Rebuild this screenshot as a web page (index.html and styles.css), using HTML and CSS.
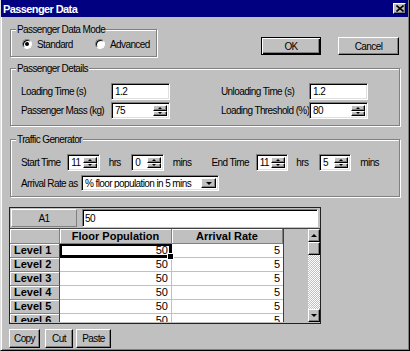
FILE: index.html
```html
<!DOCTYPE html>
<html lang="en">
<head>
  <meta charset="UTF-8">
  <meta name="viewport" content="width=device-width, initial-scale=1.0">
  <title>Passenger Data</title>
  <link rel="stylesheet" href="styles.css">
</head>
<body>
  <div class="window">
    <!-- Title bar -->
    <div class="titlebar">
      <span class="title">Passenger Data</span>
      <span class="close-btn">
        <svg width="8" height="7" viewBox="0 0 8 7"><path d="M0.5 0.5 L7.5 6.5 M7.5 0.5 L0.5 6.5" stroke="#000" stroke-width="1.6"/></svg>
      </span>
    </div>

    <div class="content">
      <div class="top-row">
        <div class="group mode-group">
          <span class="legend">Passenger Data Mode</span>
          <label class="radio radio-standard"><span class="radio-dot checked"></span>Standard</label>
          <label class="radio"><span class="radio-dot"></span>Advanced</label>
        </div>
        <div class="dialog-buttons">
          <button class="btn btn-default ok-btn">OK</button>
          <button class="btn cancel-btn">Cancel</button>
        </div>
      </div>

      <!-- Passenger details -->
      <div class="group details-group">
        <span class="legend">Passenger Details</span>
        <div class="details-grid">
          <span class="label">Loading Time (s)</span>
          <div class="field"><span class="field-text">1.2</span></div>
          <span></span>
          <span class="label">Unloading Time (s)</span>
          <div class="field"><span class="field-text">1.2</span></div>

          <span class="label">Passenger Mass (kg)</span>
          <div class="field"><span class="field-text">75</span><span class="spinner"><span class="spin-up"></span><span class="spin-down"></span></span></div>
          <span></span>
          <span class="label">Loading Threshold (%)</span>
          <div class="field"><span class="field-text">80</span><span class="spinner"><span class="spin-up"></span><span class="spin-down"></span></span></div>
        </div>
      </div>

      <!-- Traffic generator -->
      <div class="group traffic-group">
        <span class="legend">Traffic Generator</span>
        <div class="traffic-row">
          <span class="label start-label">Start Time</span>
          <div class="field time-field"><span class="field-text">11</span><span class="spinner"><span class="spin-up"></span><span class="spin-down"></span></span></div>
          <span class="label unit hrs">hrs</span>
          <div class="field time-field"><span class="field-text">0</span><span class="spinner"><span class="spin-up"></span><span class="spin-down"></span></span></div>
          <span class="label unit mins">mins</span>
          <span class="label end-label">End Time</span>
          <div class="field time-field"><span class="field-text">11</span><span class="spinner"><span class="spin-up"></span><span class="spin-down"></span></span></div>
          <span class="label unit hrs hrs-end">hrs</span>
          <div class="field time-field"><span class="field-text">5</span><span class="spinner"><span class="spin-up"></span><span class="spin-down"></span></span></div>
          <span class="label unit mins">mins</span>
        </div>
        <div class="traffic-row rate-row">
          <span class="label rate-label">Arrival Rate as</span>
          <div class="field select-field"><span class="field-text">% floor population in 5 mins</span><span class="drop-btn"></span></div>
        </div>
      </div>

      <!-- Spreadsheet -->
      <div class="sheet">
        <div class="formula-bar">
          <div class="cell-ref">A1</div>
          <div class="formula-input">50</div>
        </div>
        <div class="sheet-body">
          <div class="table-wrap">
            <div class="grid-table">
              <div class="hcell corner"></div>
              <div class="hcell">Floor Population</div>
              <div class="hcell">Arrival Rate</div>

              <div class="rhead">Level 1</div>
              <div class="dcell pop selected">50</div>
              <div class="dcell">5</div>

              <div class="rhead">Level 2</div>
              <div class="dcell pop">50</div>
              <div class="dcell">5</div>

              <div class="rhead">Level 3</div>
              <div class="dcell pop">50</div>
              <div class="dcell">5</div>

              <div class="rhead">Level 4</div>
              <div class="dcell pop">50</div>
              <div class="dcell">5</div>

              <div class="rhead">Level 5</div>
              <div class="dcell pop">50</div>
              <div class="dcell">5</div>

              <div class="rhead">Level 6</div>
              <div class="dcell pop">50</div>
              <div class="dcell">5</div>
            </div>
          </div>
          <div class="filler"></div>
          <div class="scrollbar">
            <div class="scroll-btn scroll-up"></div>
            <div class="scroll-thumb"></div>
            <div class="scroll-track"></div>
            <div class="scroll-btn scroll-down"></div>
          </div>
        </div>
      </div>

      <div class="edit-buttons">
        <button class="btn copy-btn">Copy</button>
        <button class="btn cut-btn">Cut</button>
        <button class="btn paste-btn">Paste</button>
      </div>
    </div>
  </div>
</body>
</html>
```

FILE: styles.css
```css
/* Reset */
* {
  margin: 0;
  padding: 0;
  box-sizing: border-box;
}

body {
  width: 410px;
  height: 351px;
  overflow: hidden;
  background: #c0c0c0;
  font-family: "Liberation Sans", Arial, sans-serif;
  font-size: 10px;
  letter-spacing: -0.6px;
  color: #000;
}

/* Window frame */
.window {
  height: 351px;
  border-left: 1px solid #dfdfdf;
  border-right: 1px solid #000;
  border-bottom: 1px solid #000;
  box-shadow: inset 1px 0 0 #fff, inset -1px -1px 0 #808080;
}

.titlebar {
  height: 17px;
  margin-right: 1px;
  background: #000080;
  color: #fff;
  display: flex;
  align-items: center;
  justify-content: space-between;
  padding: 0 2px 0 2px;
}

.title {
  font-weight: bold;
  font-size: 11px;
  letter-spacing: -0.6px;
}

.close-btn {
  width: 13px;
  height: 11px;
  background: #c0c0c0;
  border: 1px solid;
  border-color: #fff #000 #000 #fff;
  box-shadow: inset -1px -1px 0 #808080;
  display: flex;
  align-items: center;
  justify-content: center;
}

.content {
  padding: 12px 9px 0 9px;
}

/* Group boxes */
.group {
  position: relative;
  border: 1px solid #808080;
  box-shadow: 1px 1px 0 #fff, inset 1px 1px 0 #fff;
}

.legend {
  position: absolute;
  top: -7px;
  left: 5px;
  padding: 0 1px;
  line-height: 13px;
  background: #c0c0c0;
}

.top-row {
  height: 28px;
  display: flex;
  justify-content: space-between;
}

.mode-group {
  width: 147px;
  height: 28px;
  display: flex;
  align-items: flex-start;
  padding: 8px 0 0 11px;
}

.radio {
  display: flex;
  align-items: center;
  gap: 5px;
  height: 12px;
}

.radio-standard {
  width: 73px;
}

.radio-dot {
  position: relative;
  width: 10px;
  height: 10px;
  border-radius: 50%;
  background: #fff;
  border: 1px solid;
  border-color: #808080 #fff #fff #808080;
  box-shadow: inset 1px 1px 0 #000;
}

.radio-dot.checked::after {
  content: "";
  position: absolute;
  left: 2px;
  top: 2px;
  width: 4px;
  height: 4px;
  border-radius: 50%;
  background: #000;
}

.dialog-buttons {
  display: flex;
  gap: 17px;
  padding-top: 8px;
  margin-right: 1px;
}

/* Buttons */
.btn {
  font-family: inherit;
  font-size: inherit;
  letter-spacing: inherit;
  color: #000;
  background: #c0c0c0;
  border: 1px solid;
  border-color: #fff #000 #000 #fff;
  box-shadow: inset -1px -1px 0 #808080;
  height: 18px;
}

.btn-default {
  border-color: #000;
  box-shadow: inset 1px 1px 0 #fff, inset -1px -1px 0 #000, inset -2px -2px 0 #808080;
}

.ok-btn {
  width: 60px;
}

.cancel-btn {
  width: 61px;
}

/* Text fields */
.field {
  background: #fff;
  border: 1px solid;
  border-color: #808080 #fff #fff #808080;
  box-shadow: inset 1px 1px 0 #000, inset -1px -1px 0 #dfdfdf;
  display: flex;
  align-items: stretch;
  padding: 2px;
  height: 17px;
}

.field-text {
  flex: 1;
  display: flex;
  align-items: center;
  padding-left: 1px;
  white-space: nowrap;
  overflow: hidden;
}

.spinner {
  width: 14px;
  display: flex;
  flex-direction: column;
}

.spin-up,
.spin-down,
.drop-btn,
.scroll-btn {
  background: #c0c0c0;
  border: 1px solid;
  border-color: #fff #000 #000 #fff;
  box-shadow: inset -1px -1px 0 #808080;
  display: flex;
  align-items: center;
  justify-content: center;
}

.spin-up,
.spin-down {
  flex: 1;
}

.spin-up::after,
.scroll-up::after {
  content: "";
  border-left: 2px solid transparent;
  border-right: 2px solid transparent;
  border-bottom: 2px solid #000;
}

.spin-down::after,
.drop-btn::after,
.scroll-down::after {
  content: "";
  border-left: 2px solid transparent;
  border-right: 2px solid transparent;
  border-top: 2px solid #000;
}

.drop-btn {
  width: 15px;
}

.drop-btn::after,
.scroll-down::after {
  border-left-width: 3px;
  border-right-width: 3px;
  border-top-width: 3px;
}

.scroll-up::after {
  border-left-width: 3px;
  border-right-width: 3px;
  border-bottom-width: 3px;
}

.label {
  display: flex;
  align-items: center;
  white-space: nowrap;
}

/* Passenger details */
.details-group {
  margin-top: 11px;
  height: 58px;
}

.details-grid {
  display: grid;
  grid-template-columns: 90px 59px 51px 88px 59px;
  grid-template-rows: 17px 17px;
  row-gap: 2px;
  padding: 14px 0 0 10px;
}

/* Traffic generator */
.traffic-group {
  margin-top: 13px;
  height: 58px;
}

.traffic-row {
  display: flex;
  height: 17px;
  padding-left: 10px;
}

.traffic-row:first-of-type {
  margin-top: 14px;
}

.rate-row {
  margin-top: 4px;
  height: 16px;
}

.start-label { width: 49px; }
.time-field { width: 34px; }
.unit.hrs { width: 24px; margin-left: 9px; }
.unit.hrs-end { margin-left: 8px; }
.unit.mins { width: 41px; margin-left: 9px; }
.end-label { width: 47px; }
.rate-label { width: 60px; }

.select-field {
  width: 138px;
  height: 16px;
}

/* Spreadsheet */
.sheet {
  margin-top: 10px;
  margin-left: -1px;
  width: 312px;
  height: 117px;
  border: 1px solid #222;
  background: #c0c0c0;
}

.formula-bar {
  height: 20px;
  display: flex;
  gap: 5px;
  padding: 1px 2px 1px 1px;
}

.cell-ref {
  width: 66px;
  border: 1px solid;
  border-color: #fff #808080 #808080 #fff;
  display: flex;
  align-items: center;
  justify-content: center;
}

.formula-input {
  flex: 1;
  background: #fff;
  border: 1px solid;
  border-color: #808080 #fff #fff #808080;
  box-shadow: inset 1px 1px 0 #000;
  display: flex;
  align-items: center;
  padding-left: 2px;
}

.sheet-body {
  height: 94px;
  border-top: 1px solid #404040;
  display: flex;
}

.table-wrap {
  width: 274px;
  height: 93px;
  overflow: hidden;
  border-right: 1px solid #404040;
  font-size: 11px;
  letter-spacing: 0;
}

.grid-table {
  display: grid;
  grid-template-columns: 50px 112px 111px;
  grid-template-rows: 15px;
  grid-auto-rows: 14px;
}

.hcell,
.rhead {
  background: #c0c0c0;
  border-right: 1px solid #808080;
  border-bottom: 1px solid #808080;
  box-shadow: inset 1px 1px 0 #fff;
  font-weight: bold;
  line-height: 13px;
  white-space: nowrap;
}

.hcell {
  text-align: center;
  line-height: 14px;
}

.hcell:last-child {
  border-right: none;
}

.rhead {
  padding-left: 4px;
  border-right-color: #404040;
}

.dcell {
  background: #fff;
  border-bottom: 1px solid #c0c0c0;
  text-align: right;
  padding-right: 3px;
  line-height: 13px;
}

.dcell.pop {
  border-right: 1px solid #c0c0c0;
}

.dcell.selected {
  position: relative;
  box-shadow: inset 0 0 0 2px #000;
  border-right-color: #000;
  border-bottom-color: #000;
}

.dcell.selected::after {
  content: "";
  position: absolute;
  right: -3px;
  bottom: -3px;
  width: 5px;
  height: 5px;
  background: #000;
  border: 1px solid #fff;
}

.filler {
  flex: 1;
}

.scrollbar {
  width: 12px;
  display: flex;
  flex-direction: column;
}

.scroll-btn,
.scroll-thumb {
  height: 13px;
}

.scroll-thumb {
  background: #c0c0c0;
  border: 1px solid;
  border-color: #fff #000 #000 #fff;
  box-shadow: inset -1px -1px 0 #808080;
}

.scroll-track {
  flex: 1;
  background: repeating-conic-gradient(#fff 0 25%, #c0c0c0 0 50%) 0 0 / 2px 2px;
}

/* Copy / Cut / Paste */
.edit-buttons {
  display: flex;
  margin-top: 5px;
  margin-left: -1px;
}

.edit-buttons .btn {
  height: 19px;
}

.copy-btn { width: 31px; }
.cut-btn { width: 28px; margin-left: 5px; }
.paste-btn { width: 35px; margin-left: 3px; }
```
